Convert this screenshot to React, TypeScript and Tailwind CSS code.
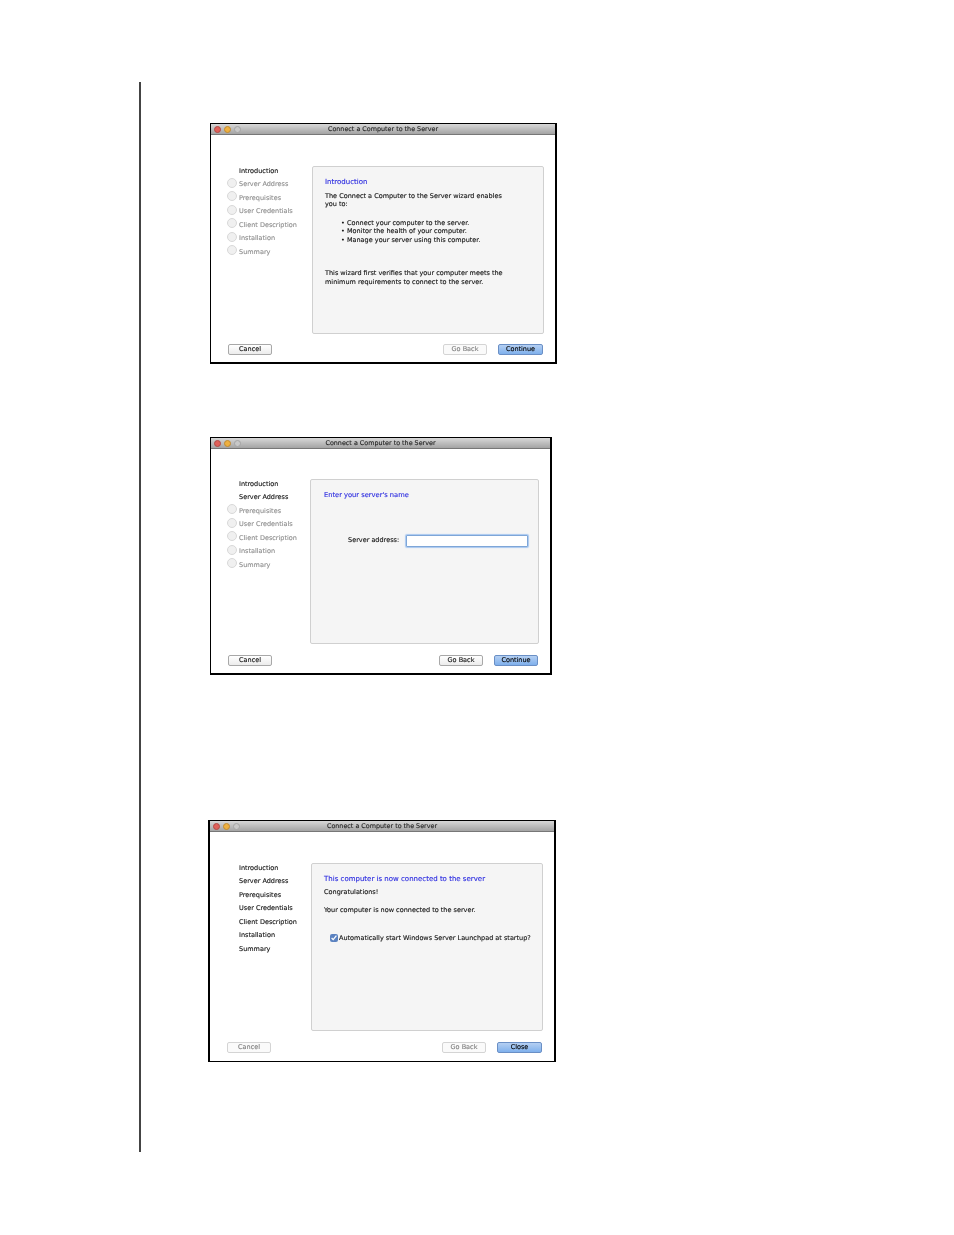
const steps = ['Introduction', 'Server Address', 'Prerequisites', 'User Credentials', 'Client Description', 'Installation', 'Summary'];

function Lights() {
  return (
    <div className="flex items-center gap-[3px] ml-[3px]">
      <span className="w-[7px] h-[7px] rounded-full bg-[#e0605a] border border-[#b04a44]" />
      <span className="w-[7px] h-[7px] rounded-full bg-[#eeb040] border border-[#c08a30]" />
      <span className="w-[7px] h-[7px] rounded-full bg-[#c8c8c8] border border-[#a4a4a4]" />
    </div>
  );
}

function Sidebar({ done, left }: { done: number; left: string }) {
  return (
    <div className={`w-[84px] shrink-0 -mt-[2px] flex flex-col ${left}`}>
      {steps.map((s, i) => (
        <div key={s} className="h-[13.5px] flex items-center relative pl-[12px]">
          {i >= done && (
            <span className="absolute left-[0px] top-[0px] w-[10px] h-[10px] rounded-full border border-[#d8d8d8] bg-[#f0f0f0]" />
          )}
          <span className={i < done ? 'text-[#111] whitespace-nowrap' : 'text-[#8e8e8e] whitespace-nowrap'}>{s}</span>
        </div>
      ))}
    </div>
  );
}

function Btn({ label, kind, wide }: { label: string; kind?: 'blue' | 'off'; wide?: boolean }) {
  const tone =
    kind === 'blue'
      ? 'bg-gradient-to-b from-[#b4cff2] to-[#7fb0ec] border-[#6a8fc5] text-[#000]'
      : kind === 'off'
        ? 'bg-[#fafafa] border-[#d4d4d4] text-[#808080]'
        : 'bg-gradient-to-b from-white to-[#ececec] border-[#a8a8a8] text-[#111]';
  return (
    <div className={`h-[11px] rounded-[2px] border flex items-center justify-center ${wide ? 'w-[45px]' : 'w-[44px]'} ${tone}`}>
      {label}
    </div>
  );
}

interface WizardProps {
  frame: string;
  done: number;
  sidebarLeft: string;
  bodyTop: string;
  panelHeight: string;
  footerTop: string;
  back?: 'off';
  cancel?: 'off';
  wideAction?: boolean;
  action: string;
  children: React.ReactNode;
}

function Wizard({ frame, done, sidebarLeft, bodyTop, panelHeight, footerTop, back, cancel, wideAction, action, children }: WizardProps) {
  return (
    <div className={`border-black bg-white text-[6.5px] leading-[8.5px] [-webkit-text-stroke:0.12px] ${frame}`}>
      <div className="h-full flex flex-col blur-[0.25px]">
        <div className="h-[11px] shrink-0 bg-gradient-to-b from-[#d8d8d8] to-[#a4a4a4] border-b border-[#777] flex items-center relative">
          <Lights />
          <div className="absolute inset-0 flex items-center justify-center text-[#222] text-[6.4px]">Connect a Computer to the Server</div>
        </div>
        <div className={`flex pr-[11px] ${bodyTop}`}>
          <Sidebar done={done} left={sidebarLeft} />
          <div className={`flex-1 bg-[#f5f5f5] border border-[#d0d0d0] rounded-[2px] text-[#111] ${panelHeight}`}>
            {children}
          </div>
        </div>
        <div className={`flex items-center pl-[17px] pr-[12px] ${footerTop}`}>
          <Btn label="Cancel" kind={cancel} />
          <div className="ml-auto flex gap-[11px]">
            <Btn label="Go Back" kind={back} />
            <Btn label={action} kind="blue" wide={wideAction} />
          </div>
        </div>
      </div>
    </div>
  );
}

export default function App() {
  return (
    <div className="h-[1235px] bg-white pt-[82px]" style={{ fontFamily: '"DejaVu Sans", sans-serif' }}>
      <div className="ml-[139px] h-[1070px] border-l-2 border-[#444] pt-[41px]">
        <Wizard
          frame="w-[347px] h-[241px] ml-[69px] border-t border-l border-r-2 border-b-2"
          done={1}
          sidebarLeft="ml-[16px] mr-[1px]"
          bodyTop="mt-[31px]"
          panelHeight="h-[168px]"
          footerTop="mt-[10px]"
          back="off"
          wideAction
          action="Continue"
        >
          <div className="pl-[12px] pt-[11px]">
            <div className="text-[#2a2ae0] text-[7px]">Introduction</div>
            <div className="mt-[5px]">The Connect a Computer to the Server wizard enables<br />you to:</div>
            <ul className="mt-[10px] ml-[16px]">
              <li>• Connect your computer to the server.</li>
              <li>• Monitor the health of your computer.</li>
              <li>• Manage your server using this computer.</li>
            </ul>
            <div className="mt-[25px]">This wizard first verifies that your computer meets the<br />minimum requirements to connect to the server.</div>
          </div>
        </Wizard>
        <Wizard
          frame="w-[342px] h-[238px] ml-[69px] mt-[73px] border-t border-l border-r-2 border-b-2"
          done={2}
          sidebarLeft="ml-[16px] -mr-[1px]"
          bodyTop="mt-[30px]"
          panelHeight="h-[165px]"
          footerTop="mt-[11px]"
          action="Continue"
        >
          <div className="pl-[13px] pt-[11px]">
            <div className="text-[#2a2ae0] text-[6.7px]">Enter your server's name</div>
            <div className="flex items-center mt-[35px] ml-[24px]">
              <span className="text-[#111] w-[58px]">Server address:</span>
              <div className="w-[122px] h-[12px] bg-white border border-[#7ea6d8] rounded-[1px] shadow-[0_0_1px_1px_#a9c8f0]" />
            </div>
          </div>
        </Wizard>
        <Wizard
          frame="w-[348px] h-[242px] ml-[67px] mt-[145px] border-t border-l-2 border-r-2 border-b"
          done={7}
          sidebarLeft="ml-[17px] mr-[0px]"
          bodyTop="mt-[31px]"
          panelHeight="h-[168px]"
          footerTop="mt-[11px]"
          back="off"
          cancel="off"
          wideAction
          action="Close"
        >
          <div className="pl-[12px] pt-[11px]">
            <div className="text-[#2a2ae0] text-[7px]">This computer is now connected to the server</div>
            <div className="mt-[4px]">Congratulations!</div>
            <div className="mt-[9.5px]">Your computer is now connected to the server.</div>
            <div className="flex items-center mt-[20px] ml-[6px] gap-[1px]">
              <input type="checkbox" defaultChecked className="w-[8px] h-[8px] m-0 accent-[#5b82c0]" />
              <span>Automatically start Windows Server Launchpad at startup?</span>
            </div>
          </div>
        </Wizard>
      </div>
    </div>
  );
}
